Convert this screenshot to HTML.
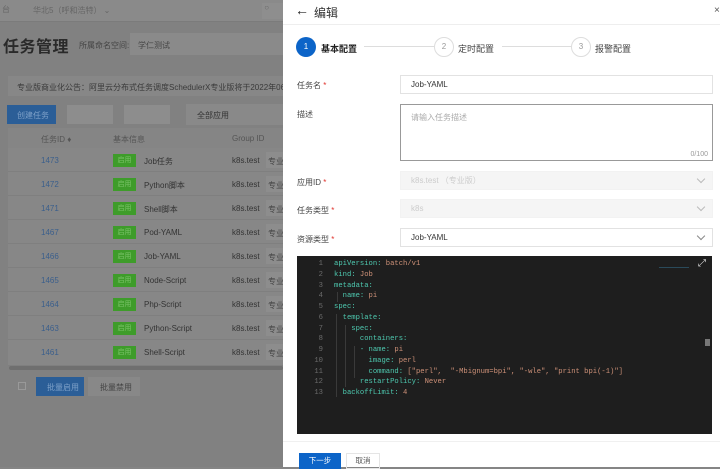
<!DOCTYPE html>
<html><head><meta charset="utf-8"><style>
*{box-sizing:border-box;margin:0;padding:0}
body{width:720px;height:467px;overflow:hidden;position:relative;background:#858585;font-family:"Liberation Sans","Noto Sans CJK SC",sans-serif;font-size:8px;color:#333}
.a{position:absolute;white-space:nowrap}
.left{position:absolute;left:0;top:0;width:283px;height:467px;background:#818181}
.row{position:absolute;left:8px;width:275px;height:24px;background:#878787;border-bottom:1px solid #7f7f7f}
.tag{position:absolute;background:#3e9c2a;color:#7cc46a;font-size:7px;width:23px;height:13px;line-height:13px;text-align:center}
.d{position:absolute;left:283px;top:0;width:437px;height:467px;background:#fff}
.lab{position:absolute;left:14px;font-size:8px;color:#444}
.lab i{color:#e0332d;font-style:normal}
.inp{position:absolute;left:117px;width:313px;border:1px solid #e2e2e2;background:#fff;font-size:8px;color:#333;padding-left:10px}
.dis{background:#f5f5f5;border-color:#f2f2f2;color:#ccc}
.chev{position:absolute;right:8px;top:4px;width:6px;height:6px;border-right:1px solid #888;border-bottom:1px solid #888;transform:rotate(45deg)}
.code{position:absolute;left:14px;top:256px;width:415px;height:178px;background:#1e1e1e;font-family:"Liberation Mono",monospace;font-size:7.2px}
.ln{position:absolute;left:0;width:26px;text-align:right;color:#6b6b6b}
.cl{position:absolute;left:37px;white-space:pre;color:#4ec9b0}
.v{color:#ce9178}
.g{position:absolute;width:1px;background:#3a3a3a}
</style></head><body>
<div class="left">
<div class="a" style="left:0;top:0;width:283px;height:22px;background:#8a8a8a;border-bottom:1px solid #7b7b7b"></div>
<div class="a" style="left:2px;top:4px;color:#666">台</div>
<div class="a" style="left:33px;top:5px;color:#666">华北5（呼和浩特） ⌄</div>
<div class="a" style="left:262px;top:3px;width:21px;height:16px;background:#8e8e8e;color:#666">&nbsp;○</div>
<div class="a" style="left:3px;top:33px;font-size:16px;color:#2a2a2a;font-weight:bold;letter-spacing:0.5px">任务管理</div>
<div class="a" style="left:79px;top:40px;color:#444">所属命名空间:</div>
<div class="a" style="left:130px;top:33px;width:153px;height:22px;background:#8a8a8a;padding:7px 8px;color:#444">学仁测试</div>
<div class="a" style="left:8px;top:76px;width:275px;height:20px;background:#878787"></div>
<div class="a" style="left:17px;top:82px;color:#3a3a3a;font-size:8px">专业版商业化公告：阿里云分布式任务调度SchedulerX专业版将于2022年06月25日</div>
<div class="a" style="left:7px;top:105px;width:49px;height:19px;background:#2b5e97;color:#7da0c8;padding:5px 0 0 10px">创建任务</div>
<div class="a" style="left:67px;top:105px;width:46px;height:19px;background:#8d8d8d"></div>
<div class="a" style="left:124px;top:105px;width:46px;height:19px;background:#8d8d8d"></div>
<div class="a" style="left:186px;top:104px;width:97px;height:21px;background:#898989;padding:6px 0 0 11px;color:#333">全部应用</div>
<div class="a" style="left:8px;top:128px;width:275px;height:20px;background:#858585"></div>
<div class="a" style="left:41px;top:134px;color:#555">任务ID ♦</div>
<div class="a" style="left:113px;top:134px;color:#555">基本信息</div>
<div class="a" style="left:232px;top:134px;color:#555">Group ID</div>
<div class="row" style="top:148px"></div><div class="row" style="top:172px"></div><div class="row" style="top:196px"></div><div class="row" style="top:220px"></div><div class="row" style="top:244px"></div><div class="row" style="top:268px"></div><div class="row" style="top:292px"></div><div class="row" style="top:316px"></div><div class="row" style="top:340px;height:26px"></div>
<div id="rows"></div>
<div class="a" style="left:9px;top:366px;width:274px;height:4px;background:#6f6f6f;border-radius:2px"></div>
<div class="a" style="left:18px;top:382px;width:8px;height:8px;border:1px solid #999"></div>
<div class="a" style="left:36px;top:377px;width:48px;height:19px;background:#2b5e97;color:#7da0c8;padding:5px 0 0 11px">批量启用</div>
<div class="a" style="left:88px;top:377px;width:52px;height:19px;background:#888;color:#444;padding:5px 0 0 12px">批量禁用</div>
</div>
<script>
var d=[["1473","Job任务"],["1472","Python脚本"],["1471","Shell脚本"],["1467","Pod-YAML"],["1466","Job-YAML"],["1465","Node-Script"],["1464","Php-Script"],["1463","Python-Script"],["1461","Shell-Script"]],h="";
d.forEach(function(r,i){var y=148+i*24;h+='<div class="a" style="left:41px;top:'+(y+8)+'px;color:#3b5f8c">'+r[0]+'</div><div class="tag" style="left:113px;top:'+(y+6)+'px">启用</div><div class="a" style="left:144px;top:'+(y+8)+'px;color:#333">'+r[1]+'</div><div class="a" style="left:232px;top:'+(y+8)+'px;color:#333">k8s.test</div><div class="a" style="left:266px;top:'+(y+4)+'px;width:17px;height:16px;background:#8d8d8d;padding:4px 0 0 2px;color:#444">专业</div>';});
document.getElementById("rows").innerHTML=h;
</script>
<div class="d">
<div class="a" style="left:0;top:0;width:437px;height:25px;border-bottom:1px solid #eee"></div>
<div class="a" style="left:12px;top:2px;font-size:14px;color:#222">←</div>
<div class="a" style="left:31px;top:4px;font-size:12px;color:#333">编辑</div>
<div class="a" style="left:431px;top:5px;font-size:10px;color:#555">×</div>
<div class="a" style="left:13px;top:37px;width:20px;height:20px;border-radius:50%;background:#0c64c8;color:#fff;text-align:center;line-height:20px;font-size:8px">1</div>
<div class="a" style="left:38px;top:42px;font-size:9px;font-weight:bold;color:#222">基本配置</div>
<div class="a" style="left:81px;top:46px;width:70px;height:1px;background:#ddd"></div>
<div class="a" style="left:151px;top:37px;width:20px;height:20px;border-radius:50%;border:1px solid #ddd;color:#999;text-align:center;line-height:18px;font-size:8px">2</div>
<div class="a" style="left:175px;top:42px;font-size:9px;color:#444">定时配置</div>
<div class="a" style="left:219px;top:46px;width:70px;height:1px;background:#ddd"></div>
<div class="a" style="left:288px;top:37px;width:20px;height:20px;border-radius:50%;border:1px solid #ddd;color:#999;text-align:center;line-height:18px;font-size:8px">3</div>
<div class="a" style="left:312px;top:42px;font-size:9px;color:#444">报警配置</div>
<div class="lab" style="top:80px">任务名 <i>*</i></div>
<div class="inp" style="top:75px;height:19px;line-height:17px">Job-YAML</div>
<div class="lab" style="top:109px">描述</div>
<div class="inp" style="top:104px;height:57px;border-color:#999;color:#aaa;padding-top:7px">请输入任务描述<span class="a" style="right:4px;top:46px;color:#999;font-size:7px">0/100</span></div>
<div class="lab" style="top:177px">应用ID <i>*</i></div>
<div class="inp dis" style="top:171px;height:19px;line-height:17px">k8s.test （专业版）<span class="chev" style="border-color:#bbb"></span></div>
<div class="lab" style="top:205px">任务类型 <i>*</i></div>
<div class="inp dis" style="top:199px;height:19px;line-height:17px">k8s<span class="chev" style="border-color:#bbb"></span></div>
<div class="lab" style="top:234px">资源类型 <i>*</i></div>
<div class="inp" style="top:228px;height:19px;line-height:17px">Job-YAML<span class="chev"></span></div>
<div class="code">
<div class="g" style="left:39px;top:58px;height:83px"></div>
<div class="g" style="left:48px;top:69px;height:62px"></div>
<div class="g" style="left:57px;top:90px;height:32px"></div>
<div class="g" style="left:40px;top:36px;height:10px"></div>
<div id="code"></div>
<div class="a" style="right:6px;top:2px;color:#ddd;font-size:10px">⤢</div>
<div class="a" style="left:362px;top:2px;width:30px;height:10px;border-bottom:1px solid #2a4a5a"></div>
<div class="a" style="right:2px;top:83px;width:5px;height:7px;background:#777"></div>
</div>
<div class="a" style="left:0;top:441px;width:437px;height:1px;background:#f0f0f0"></div>
<div class="a" style="left:16px;top:453px;width:42px;height:16px;background:#0c64c8;color:#fff;text-align:center;line-height:16px;font-size:7.5px">下一步</div>
<div class="a" style="left:63px;top:453px;width:34px;height:16px;border:1px solid #e5e5e5;color:#555;text-align:center;line-height:14px;font-size:7.5px">取消</div>
</div>
<script>
var c=['apiVersion: <span class=v>batch/v1</span>','kind: <span class=v>Job</span>','metadata:','  name: <span class=v>pi</span>','spec:','  template:','    spec:','      containers:','      - name: <span class=v>pi</span>','        image: <span class=v>perl</span>','        command: <span class=v>["perl",  "-Mbignum=bpi", "-wle", "print bpi(-1)"]</span>','      restartPolicy: <span class=v>Never</span>','  backoffLimit: <span class=v>4</span>'],s="";
c.forEach(function(l,i){var y=4+i*10.75;s+='<div class="a ln" style="top:'+y+'px">'+(i+1)+'</div><div class="cl" style="top:'+y+'px">'+l+'</div>';});
document.getElementById("code").innerHTML=s;
</script>
</body></html>
